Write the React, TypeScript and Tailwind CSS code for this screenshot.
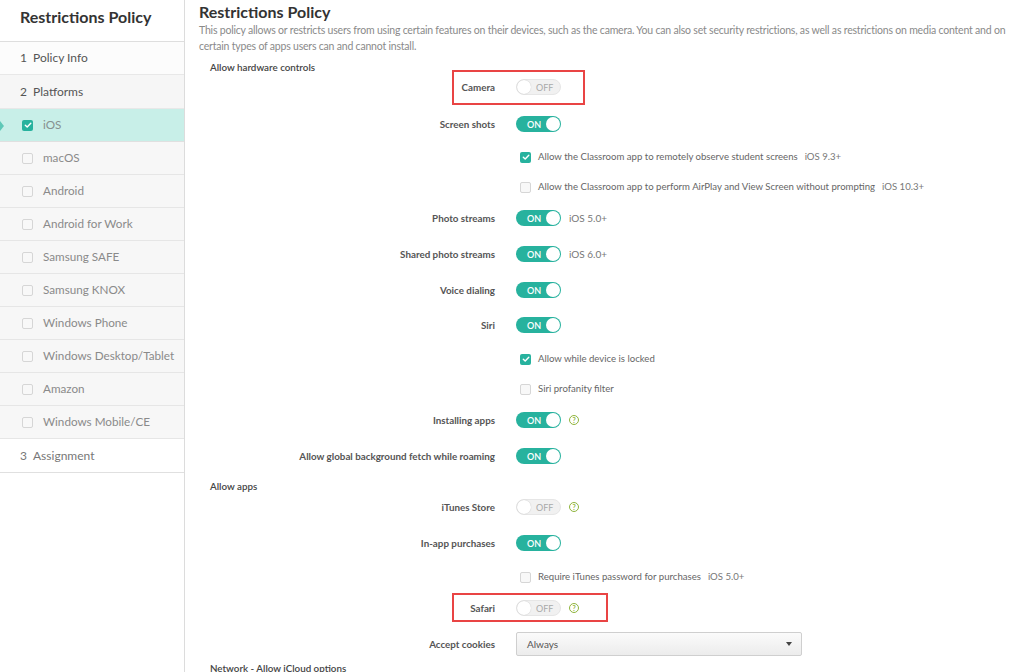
import React from "react";

function Check({ checked }: { checked?: boolean }) {
  if (checked) {
    return (
      <span className="flex h-[11px] w-[11px] shrink-0 items-center justify-center rounded-[2px] bg-[#27b29e]">
        <svg width="8" height="8" viewBox="0 0 8 8" fill="none">
          <path d="M1.3 4.2 L3.2 6 L6.8 2.2" stroke="white" strokeWidth="1.4" strokeLinecap="round" strokeLinejoin="round" />
        </svg>
      </span>
    );
  }
  return <span className="h-[11px] w-[11px] shrink-0 rounded-[2px] border border-[#d6d6d6] bg-[#f8f8f8]" />;
}

function Toggle({ on }: { on?: boolean }) {
  if (on) {
    return (
      <div className="flex h-[16px] w-[45px] items-center justify-between rounded-full bg-[#27b29e] pl-[11px] pr-[1px]">
        <span className="text-[9px] font-semibold leading-none text-white">ON</span>
        <span className="h-[14px] w-[14px] rounded-full bg-white" />
      </div>
    );
  }
  return (
    <div className="flex h-[16px] w-[45px] items-center rounded-full border border-[#e6e6e6] bg-[#f1f1f1]">
      <span className="h-[14px] w-[14px] rounded-full bg-white shadow-[0_0_1px_rgba(0,0,0,0.25)]" />
      <span className="ml-[5px] text-[9px] leading-none text-[#a9a9a9]">OFF</span>
    </div>
  );
}

function Help() {
  return (
    <span className="ml-[8px] flex h-[10px] w-[10px] items-center justify-center rounded-full border border-[#8fb43c] text-[7px] font-bold leading-none text-[#8fb43c]">
      ?
    </span>
  );
}

function ToggleRow({
  label,
  on,
  hint,
  help,
  className = "",
}: {
  label: string;
  on?: boolean;
  hint?: string;
  help?: boolean;
  className?: string;
}) {
  return (
    <div className={`flex h-[20px] items-center ${className}`}>
      <div className="w-[285px] text-right text-[9.8px] font-bold text-[#555]">{label}</div>
      <div className="ml-[21px] flex items-center">
        <Toggle on={on} />
        {hint && <span className="ml-[8px] text-[10px] text-[#777]">{hint}</span>}
        {help && <Help />}
      </div>
    </div>
  );
}

function CheckRow({
  label,
  checked,
  hint,
  className = "",
}: {
  label: string;
  checked?: boolean;
  hint?: string;
  className?: string;
}) {
  return (
    <div className={`flex h-[20px] items-center pl-[310px] ${className}`}>
      <Check checked={checked} />
      <span className="ml-[7px] text-[9.6px] text-[#666]">{label}</span>
      {hint && <span className="ml-[7px] text-[9.6px] text-[#777]">{hint}</span>}
    </div>
  );
}

const platforms = [
  "macOS",
  "Android",
  "Android for Work",
  "Samsung SAFE",
  "Samsung KNOX",
  "Windows Phone",
  "Windows Desktop/Tablet",
  "Amazon",
  "Windows Mobile/CE",
];

export default function App() {
  return (
    <div className="flex h-screen w-full overflow-hidden bg-white font-['Lato',sans-serif]">
      <aside className="w-[185px] shrink-0 border-r border-[#dcdcdc] bg-white">
        <div className="flex h-[42px] items-center border-b border-[#dedede] pb-[8px] pl-[20px]">
          <h2 className="text-[16px] font-bold text-[#333]">Restrictions Policy</h2>
        </div>
        <div className="flex h-[33px] items-center border-b border-[#e8e8e8] bg-[#fcfcfc] pl-[20px] text-[12px] text-[#555]">
          <span className="w-[13px]">1</span>
          <span>Policy Info</span>
        </div>
        <div className="flex h-[34px] items-center border-b border-[#e8e8e8] bg-[#f6f6f6] pl-[20px] text-[12px] text-[#555]">
          <span className="w-[13px]">2</span>
          <span>Platforms</span>
        </div>
        <div className="relative flex h-[33px] items-center border-b border-[#e0e0e0] bg-[#c8efe8] pl-[22px] text-[11.7px] text-[#86918f]">
          <span className="absolute left-0 top-[12px] h-0 w-0 border-y-[5px] border-l-[4px] border-y-transparent border-l-[#5fc8b7]" />
          <Check checked />
          <span className="ml-[10px]">iOS</span>
        </div>
        {platforms.map((p) => (
          <div
            key={p}
            className="flex h-[33px] items-center border-b border-[#e6e6e6] bg-[#f7f7f7] pl-[22px] text-[11.7px] text-[#8a8a8a]"
          >
            <Check />
            <span className="ml-[10px]">{p}</span>
          </div>
        ))}
        <div className="flex h-[34px] items-center border-b border-[#e0e0e0] bg-white pl-[20px] text-[12px] text-[#777]">
          <span className="w-[13px]">3</span>
          <span>Assignment</span>
        </div>
      </aside>

      <main className="flex-1 pl-[14px] pt-[2px]">
        <h1 className="text-[16px] font-bold leading-[20px] text-[#333]">Restrictions Policy</h1>
        <p className="text-[10.5px] leading-[16px] tracking-[-0.2px] text-[#8a8a8a]">
          This policy allows or restricts users from using certain features on their devices, such as the camera. You
          can also set security restrictions, as well as restrictions on media content and on certain types of apps
          users can and cannot install.
        </p>

        <div className="flex flex-col pl-[11px]">
          <div className="mt-[3px] flex h-[20px] items-center text-[9.8px] font-semibold text-[#444]">
            Allow hardware controls
          </div>
          <div className="relative">
            <ToggleRow label="Camera" />
            <span className="pointer-events-none absolute left-[242px] top-[-7px] h-[35px] w-[133px] border-2 border-[#e94444]" />
          </div>
          <ToggleRow className="mt-[17px]" label="Screen shots" on />
          <CheckRow className="mt-[13px]" label="Allow the Classroom app to remotely observe student screens" hint="iOS 9.3+" checked />
          <CheckRow
            className="mt-[10px]"
            label="Allow the Classroom app to perform AirPlay and View Screen without prompting"
            hint="iOS 10.3+"
          />
          <ToggleRow className="mt-[11px]" label="Photo streams" on hint="iOS 5.0+" />
          <ToggleRow className="mt-[16px]" label="Shared photo streams" on hint="iOS 6.0+" />
          <ToggleRow className="mt-[16px]" label="Voice dialing" on />
          <ToggleRow className="mt-[15px]" label="Siri" on />
          <CheckRow className="mt-[14px]" label="Allow while device is locked" checked />
          <CheckRow className="mt-[10px]" label="Siri profanity filter" />
          <ToggleRow className="mt-[11px]" label="Installing apps" on help />
          <ToggleRow className="mt-[16px]" label="Allow global background fetch while roaming" on />
          <div className="mt-[10px] flex h-[20px] items-center text-[9.8px] font-semibold text-[#444]">Allow apps</div>
          <ToggleRow className="mt-[1px]" label="iTunes Store" help />
          <ToggleRow className="mt-[16px]" label="In-app purchases" on />
          <CheckRow className="mt-[14px]" label="Require iTunes password for purchases" hint="iOS 5.0+" />
          <div className="relative mt-[11px]">
            <ToggleRow label="Safari" help />
            <span className="pointer-events-none absolute left-[242px] top-[-5px] h-[29px] w-[156px] border-2 border-[#e94444]" />
          </div>
          <div className="mt-[14px] flex h-[24px] items-center">
            <div className="w-[285px] text-right text-[9.8px] font-bold text-[#555]">Accept cookies</div>
            <div className="ml-[21px] flex h-[24px] w-[286px] items-center justify-between rounded-[2px] border border-[#cfcfcf] bg-gradient-to-b from-[#fbfbfb] to-[#ececec] pl-[10px] pr-[9px]">
              <span className="text-[10px] text-[#555]">Always</span>
              <svg width="6" height="4" viewBox="0 0 6 4">
                <path d="M0 0 L6 0 L3 4 Z" fill="#444" />
              </svg>
            </div>
          </div>
          <div className="mt-[2px] flex h-[20px] items-center text-[9.8px] font-semibold text-[#444]">
            Network - Allow iCloud options
          </div>
        </div>
      </main>
    </div>
  );
}
